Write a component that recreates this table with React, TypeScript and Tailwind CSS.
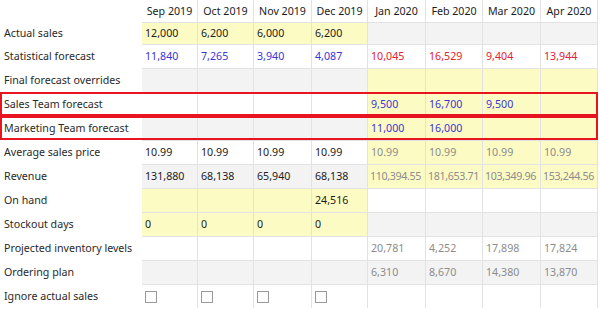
import React from "react";

type Cell = { v?: string; bg?: "y" | "row"; c?: "k" | "b" | "r" | "g"; cb?: boolean };
type Row = { label: string; cells: Cell[]; alt: boolean; h: string; box?: boolean };

const widths = ["w-[56px]", "w-[56px]", "w-[58px]", "w-[56px]", "w-[58px]", "w-[57px]", "w-[58px]", "w-[57px]"];
const months = ["Sep 2019", "Oct 2019", "Nov 2019", "Dec 2019", "Jan 2020", "Feb 2020", "Mar 2020", "Apr 2020"];

const Y: Cell = { bg: "y" };
const E: Cell = {};

const rows: Row[] = [
  {
    label: "Actual sales", alt: true, h: "h-[22px]",
    cells: [
      { v: "12,000", bg: "y" }, { v: "6,200", bg: "y" }, { v: "6,000", bg: "y" }, { v: "6,200", bg: "y" }, E, E, E, E,
    ],
  },
  {
    label: "Statistical forecast", alt: false, h: "h-[24px]",
    cells: [
      { v: "11,840", c: "b" }, { v: "7,265", c: "b" }, { v: "3,940", c: "b" }, { v: "4,087", c: "b" },
      { v: "10,045", c: "r" }, { v: "16,529", c: "r" }, { v: "9,404", c: "r" }, { v: "13,944", c: "r" },
    ],
  },
  { label: "Final forecast overrides", alt: true, h: "h-[24px]", cells: [E, E, E, E, Y, Y, Y, Y] },
  {
    label: "Sales Team forecast", alt: false, h: "h-[24px]", box: true,
    cells: [E, E, E, E, { v: "9,500", bg: "y", c: "b" }, { v: "16,700", bg: "y", c: "b" }, { v: "9,500", bg: "y", c: "b" }, Y],
  },
  {
    label: "Marketing Team forecast", alt: true, h: "h-[24px]", box: true,
    cells: [E, E, E, E, { v: "11,000", bg: "y", c: "b" }, { v: "16,000", bg: "y", c: "b" }, Y, Y],
  },
  {
    label: "Average sales price", alt: false, h: "h-[24px]",
    cells: [
      { v: "10.99" }, { v: "10.99" }, { v: "10.99" }, { v: "10.99" },
      { v: "10.99", bg: "y", c: "g" }, { v: "10.99", bg: "y", c: "g" }, { v: "10.99", bg: "y", c: "g" }, { v: "10.99", bg: "y", c: "g" },
    ],
  },
  {
    label: "Revenue", alt: true, h: "h-[24px]",
    cells: [
      { v: "131,880" }, { v: "68,138" }, { v: "65,940" }, { v: "68,138" },
      { v: "110,394.55", bg: "y", c: "g" }, { v: "181,653.71", bg: "y", c: "g" }, { v: "103,349.96", bg: "y", c: "g" }, { v: "153,244.56", bg: "y", c: "g" },
    ],
  },
  { label: "On hand", alt: false, h: "h-[24px]", cells: [Y, Y, Y, { v: "24,516", bg: "y" }, E, E, E, E] },
  {
    label: "Stockout days", alt: true, h: "h-[24px]",
    cells: [{ v: "0", bg: "y" }, { v: "0", bg: "y" }, { v: "0", bg: "y" }, { v: "0", bg: "y" }, E, E, E, E],
  },
  {
    label: "Projected inventory levels", alt: false, h: "h-[24px]",
    cells: [E, E, E, E, { v: "20,781", c: "g" }, { v: "4,252", c: "g" }, { v: "17,898", c: "g" }, { v: "17,824", c: "g" }],
  },
  {
    label: "Ordering plan", alt: true, h: "h-[24px]",
    cells: [E, E, E, E, { v: "6,310", c: "g" }, { v: "8,670", c: "g" }, { v: "14,380", c: "g" }, { v: "13,870", c: "g" }],
  },
  {
    label: "Ignore actual sales", alt: false, h: "h-[24px]",
    cells: [{ cb: true }, { cb: true }, { cb: true }, { cb: true }, E, E, E, E],
  },
];

function colorClass(c?: string) {
  if (c === "b") return "text-[#3a36d4]";
  if (c === "r") return "text-[#e4222f]";
  if (c === "g") return "text-[#8c8c8c]";
  return "text-[#1c1c1c]";
}

export default function App() {
  return (
    <div
      className="w-[600px] h-[309px] bg-white overflow-hidden text-[10.67px] leading-none"
      style={{ fontFamily: '"Noto Sans", "Open Sans", sans-serif' }}
    >
      <div className="flex h-[22px]">
        <div className="w-[142px] shrink-0" />
        {months.map((m, i) => (
          <div
            key={m}
            className={`${widths[i]} shrink-0 flex items-center justify-center border-r border-[#e2e2e2] text-[#1c1c1c]`}
          >
            {m}
          </div>
        ))}
      </div>
      {rows.map((r) => (
        <div key={r.label} className={`relative flex ${r.h}`}>
          <div className="w-[142px] shrink-0 flex items-center pl-[4px] text-[#2a2a2a] whitespace-nowrap">{r.label}</div>
          {r.cells.map((c, i) => {
            const bg = c.bg === "y" ? "bg-[#fdfbc4]" : r.alt ? "bg-[#f3f3f3]" : "bg-white";
            const long = (c.v ?? "").length > 8;
            return (
              <div
                key={i}
                className={`${widths[i]} shrink-0 flex items-center whitespace-nowrap overflow-hidden border-t border-r border-[#e2e2e2] ${long ? "pl-[2px] tracking-[-0.35px]" : "pl-[3px]"} ${bg} ${colorClass(c.c)}`}
              >
                {c.cb ? <div className="w-[12px] h-[12px] border border-[#9a9a9a] bg-white" /> : c.v}
              </div>
            );
          })}
          {r.box && (
            <div className="absolute left-0 top-0 w-[598px] h-full border-2 border-[#e8141f] pointer-events-none" />
          )}
        </div>
      ))}
    </div>
  );
}
